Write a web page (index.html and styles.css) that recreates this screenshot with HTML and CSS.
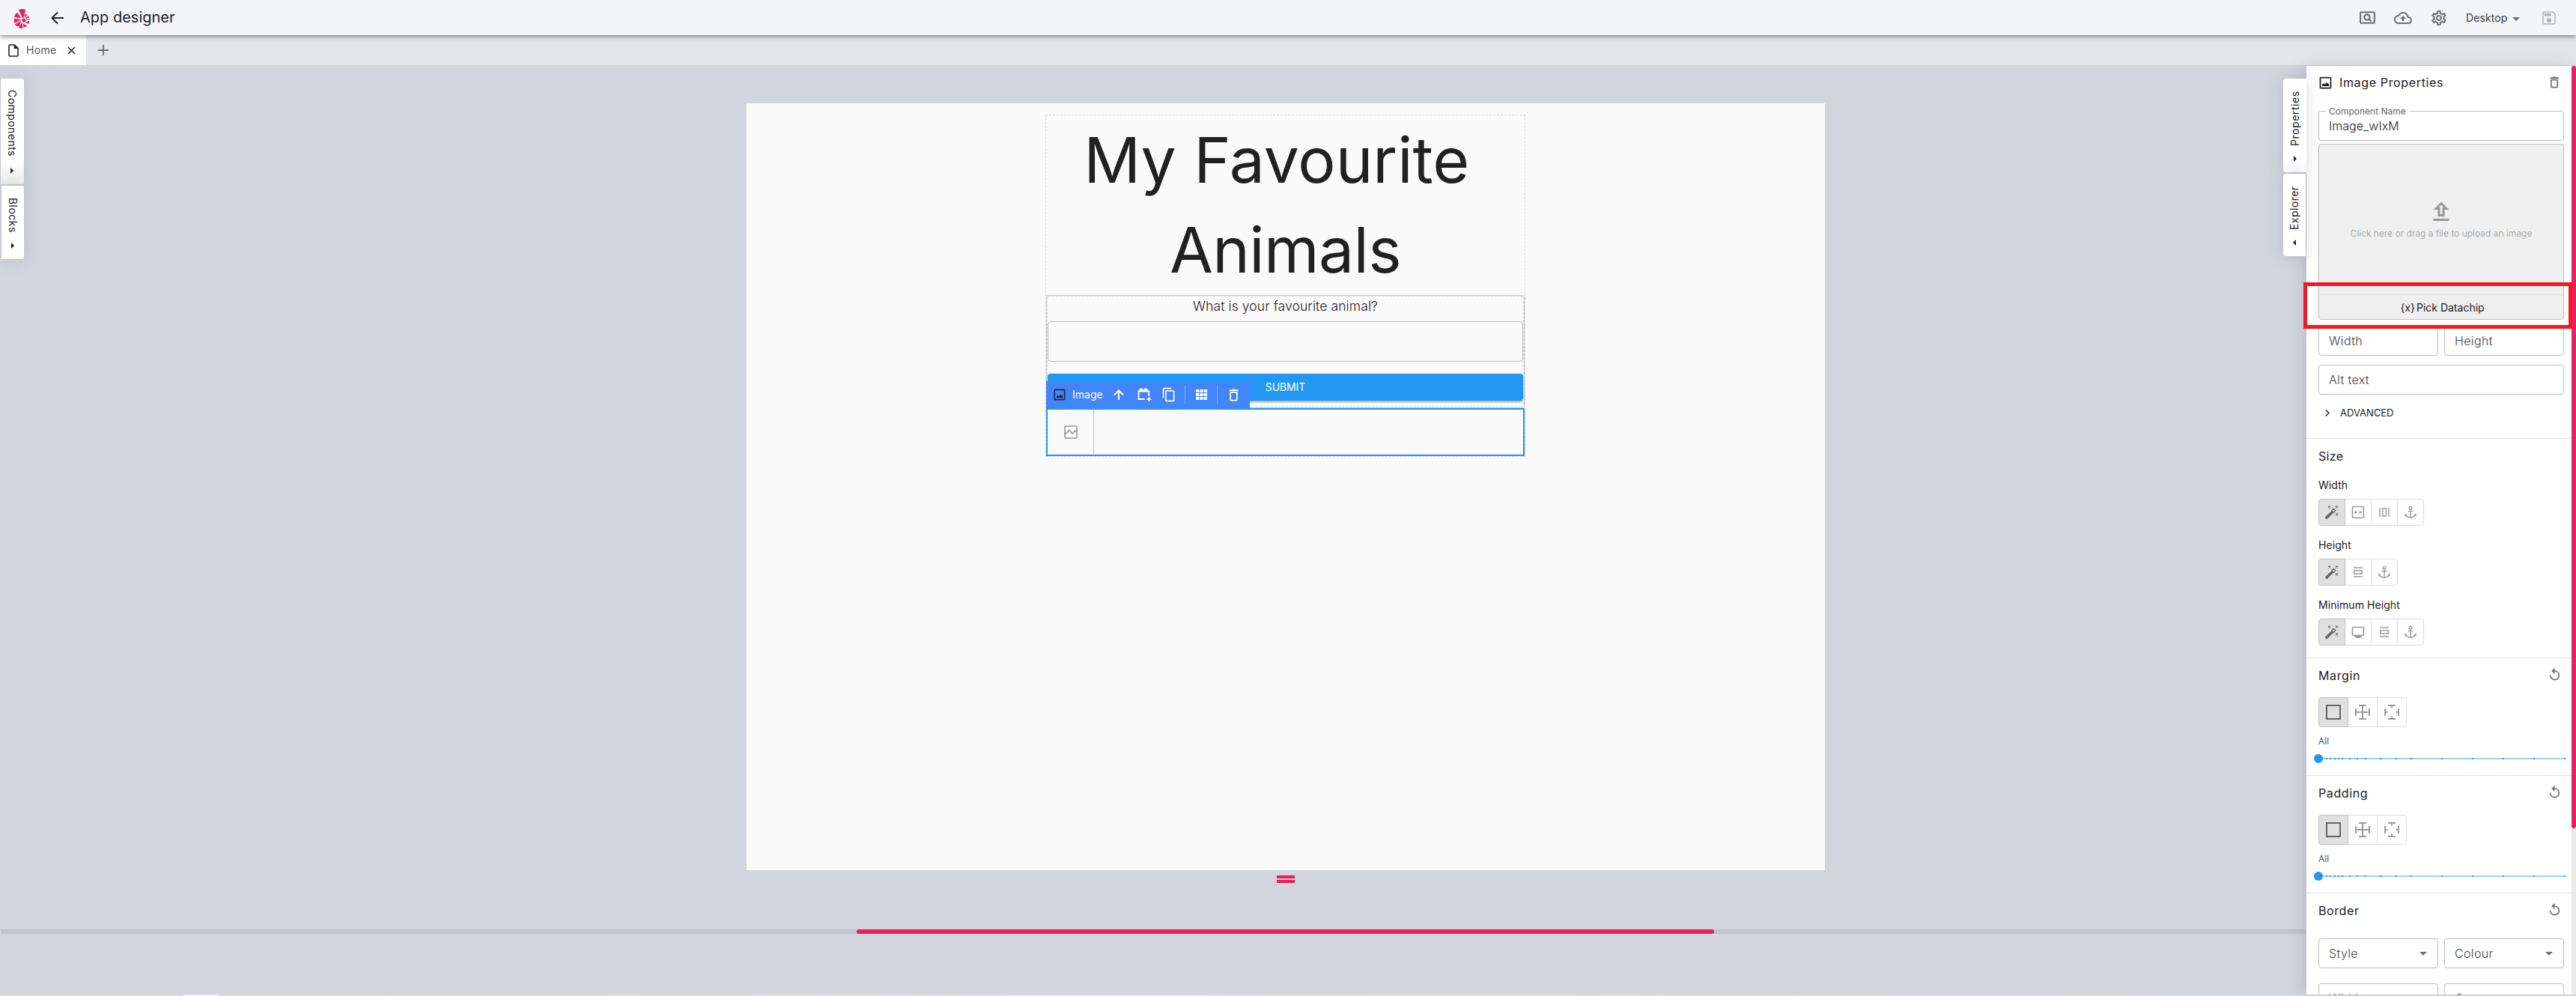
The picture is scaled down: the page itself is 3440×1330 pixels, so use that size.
FILE: index.html
```html
<!DOCTYPE html>
<html lang="en">
<head>
<meta charset="utf-8">
<title>App designer</title>
<link rel="stylesheet" href="styles.css">
</head>
<body>
<svg class="defs" width="0" height="0">
  <symbol id="image" viewBox="0 0 24 24"><path d="M19 5v14H5V5h14m0-2H5c-1.100 0-2 .9-2 2v14c0 1.100.9 2 2 2h14c1.100 0 2-.9 2-2V5c0-1.100-.9-2-2-2z"/><path d="M7 17v-2.200l2-2.300 2 2 2.500-3 1.500 2 1-1 1.500 2.200V17z"/></symbol>
  <symbol id="trash" viewBox="0 0 24 24"><path d="M6 19c0 1.100.9 2 2 2h8c1.100 0 2-.9 2-2V7H6v12zM8 9h8v10H8V9zm7.500-5-1-1h-5l-1 1H5v2h14V4z"/></symbol>
  <symbol id="caret" viewBox="0 0 24 24"><path d="M7 10l5 5 5-5z"/></symbol>
  <symbol id="replay" viewBox="0 0 24 24"><path d="M12 5V1L7 6l5 5V7c3.310 0 6 2.690 6 6s-2.690 6-6 6-6-2.690-6-6H4c0 4.420 3.580 8 8 8s8-3.580 8-8-3.580-8-8-8z"/></symbol>
  <symbol id="wand" viewBox="0 0 20 20"><path d="M1.200 16.300 9.800 8l2.600 2.600-8.600 8.300q-.6.600-1.200 0l-1.400-1.400q-.6-.6 0-1.200z"/><path d="M9.800 8l2.600-2.600 2.600 2.600-2.600 2.600z" fill="none" stroke="currentColor" stroke-width="1.100"/><path d="M5.200 1.600l3 3m0-3l-3 3M15 1.600l3 3m0-3l-3 3M15 11.500l3 3m0-3l-3 3" fill="none" stroke="currentColor" stroke-width="1.200"/></symbol>
  <symbol id="fit" viewBox="0 0 20 20"><rect x="2.500" y="2.500" width="15" height="15" rx="1" fill="none" stroke="currentColor" stroke-width="1.600"/><path d="M4.500 10l3-2.300v1.600h1.300v1.400H7.500v1.600zM15.500 10l-3-2.300v1.600h-1.300v1.400h1.300v1.600z"/></symbol>
  <symbol id="cols" viewBox="0 0 20 20"><path d="M4 4v12M16 4v12M7.700 4.700h4.600v10.600H7.700z" fill="none" stroke="currentColor" stroke-width="1.500"/></symbol>
  <symbol id="rows" viewBox="0 0 20 20"><path d="M4 4h12M4 16h12M4.700 7.700h10.600v4.600H4.700z" fill="none" stroke="currentColor" stroke-width="1.500"/></symbol>
  <symbol id="anchor" viewBox="0 0 20 20"><g fill="none" stroke="currentColor" stroke-width="1.400"><circle cx="10" cy="4.200" r="1.800"/><path d="M10 6v11.500M6.500 8.600h7M3.300 12.800Q4.500 17 10 17.300q5.500-.3 6.700-4.500"/></g><path d="M2.200 11.500l.3 4.200 3.400-2zM17.800 11.500l-.3 4.200-3.400-2z"/></symbol>
  <symbol id="screen" viewBox="0 0 20 20"><rect x="2.500" y="3.500" width="15" height="11" rx="1" fill="none" stroke="currentColor" stroke-width="1.700"/><path d="M5 15h10v1.500h-1.500V18h-7v-1.500H5z"/></symbol>
  <symbol id="square" viewBox="0 0 20 20"><path d="M1 1h18v18H1z" fill="none" stroke="currentColor" stroke-width="2"/></symbol>
  <symbol id="cross" viewBox="0 0 20 20"><path d="M10 1v18M1 10h18M5 1h10M5 19h10M1 5v10M19 5v10" fill="none" stroke="currentColor" stroke-width="2"/></symbol>
  <symbol id="sides" viewBox="0 0 20 20"><path d="M10 0v4.500M10 15.500V20M0 10h4.500M15.500 10H20M5 1h10M5 19h10M1 5v10M19 5v10" fill="none" stroke="currentColor" stroke-width="2"/></symbol>
</svg>

<header class="topbar">
  <svg class="logo" viewBox="0 0 68 88"><path d="M21 5Q36 0 50 5L42 38h-6zM15 16l17 24L3 36Q6 22 15 16zM3 42l30 4L4 61Q1 50 3 42zM5 66l26-15-6 23q-14 1-20-8zM22 78l13-20 4 21-6 5zM39 61l16 11q0 6-13 5zM50 56l16-5q-1 9-6 14zM53 48l13-6v5zM49 38l14-7 2 6-12 6zM45 32l3-8 10 1-9 11z"/><circle cx="43" cy="49" r="8"/></svg>
  <svg class="back" viewBox="0 0 18 18"><path d="M17 9H2M9 1.500L1.500 9 9 16.500"/></svg>
  <h1>App designer</h1>
  <div class="actions">
    <svg viewBox="0 0 24 24" width="25" height="25"><path d="M11.490 16c.88 0 1.700-.26 2.390-.7l2.440 2.440 1.420-1.420-2.440-2.430c.44-.7.7-1.510.7-2.390C16 9.010 13.990 7 11.500 7S7 9.010 7 11.500 9.010 16 11.490 16zm.01-7C12.880 9 14 10.120 14 11.500S12.880 14 11.500 14 9 12.880 9 11.500 10.120 9 11.500 9zM20 4H4c-1.100 0-2 .9-2 2v12c0 1.100.9 2 2 2h16c1.100 0 2-.9 2-2V6c0-1.100-.9-2-2-2zm0 14H4V6h16v12z"/></svg>
    <svg class="cloud" viewBox="0 0 24 24" width="24" height="24"><path d="M19.350 10.040C18.670 6.590 15.640 4 12 4 9.110 4 6.600 5.640 5.350 8.040 2.340 8.360 0 10.910 0 14c0 3.310 2.690 6 6 6h13c2.760 0 5-2.240 5-5 0-2.640-2.050-4.780-4.650-4.960zM19 18H6c-2.210 0-4-1.790-4-4 0-2.050 1.530-3.760 3.560-3.970l1.070-.11.5-.95C8.080 7.140 9.940 6 12 6c2.620 0 4.880 1.860 5.390 4.430l.3 1.500 1.530.11c1.560.1 2.780 1.410 2.780 2.960 0 1.650-1.350 3-3 3zM8 13h2.550v3h2.900v-3H16l-4-4z"/></svg>
    <svg class="gear" viewBox="0 0 24 24" width="24" height="24"><path d="M19.430 12.980c.04-.32.070-.64.070-.98 0-.34-.03-.66-.07-.98l2.110-1.650c.19-.15.240-.42.120-.64l-2-3.460c-.09-.16-.26-.25-.44-.25-.06 0-.12.010-.17.030l-2.490 1c-.52-.4-1.080-.73-1.690-.98l-.38-2.650C14.460 2.180 14.250 2 14 2h-4c-.25 0-.46.180-.49.420l-.38 2.650c-.61.250-1.170.590-1.690.980l-2.490-1c-.06-.02-.12-.03-.18-.03-.17 0-.34.090-.43.250l-2 3.460c-.13.220-.07.490.120.640l2.110 1.650c-.04.320-.07.650-.07.980 0 .33.030.660.070.980l-2.110 1.650c-.19.150-.24.420-.12.640l2 3.460c.09.160.260.250.440.250.06 0 .12-.01.170-.03l2.490-1c.52.400 1.080.730 1.690.980l.38 2.650c.03.240.240.420.490.420h4c.25 0 .46-.18.490-.42l.38-2.650c.61-.25 1.170-.59 1.690-.98l2.490 1c.06.020.120.030.180.030.17 0 .34-.09.430-.25l2-3.460c.12-.22.070-.49-.12-.64l-2.110-1.650zm-1.980-1.710c.04.310.050.520.050.730 0 .21-.02.430-.05.730l-.14 1.130.89.700 1.080.840-.7 1.210-1.270-.51-1.040-.42-.9.680c-.43.320-.84.560-1.250.730l-1.060.43-.16 1.130-.2 1.350h-1.400l-.19-1.350-.16-1.130-1.060-.43c-.43-.18-.83-.41-1.230-.71l-.91-.7-1.060.43-1.270.51-.7-1.210 1.080-.84.890-.7-.14-1.130c-.03-.31-.05-.54-.05-.74s.02-.43.050-.73l.14-1.130-.89-.7-1.080-.84.700-1.210 1.270.51 1.040.42.900-.68c.43-.32.840-.56 1.250-.73l1.060-.43.160-1.130.200-1.350h1.390l.19 1.350.16 1.130 1.060.43c.43.180.830.410 1.230.71l.91.700 1.060-.43 1.270-.51.700 1.210-1.070.85-.89.700.140 1.130zM12 8c-2.210 0-4 1.790-4 4s1.790 4 4 4 4-1.790 4-4-1.790-4-4-4zm0 6c-1.100 0-2-.9-2-2s.9-2 2-2 2 .9 2 2-.9 2-2 2z"/></svg>
    <span class="device">Desktop</span>
    <svg class="dev-caret" width="24" height="24"><use href="#caret"/></svg>
    <svg class="save" viewBox="0 0 18 18" width="18" height="18"><path d="M1 3q0-2 2-2h11l3 3v11q0 2-2 2H3q-2 0-2-2z" fill="none" stroke="currentColor" stroke-width="1.600"/><path d="M3 3h9v3.500H3z"/><circle cx="9" cy="12" r="3"/></svg>
  </div>
</header>

<nav class="tabs">
  <div class="tab">
    <svg class="doc" viewBox="0 0 14 17"><path d="M1.800 1H8.500L13 5.300V14.800Q13 16 11.800 16H2.200Q1 16 1 14.800V1.800Z" fill="none" stroke="currentColor" stroke-width="1.600"/><path d="M7.700 1v5H13z"/></svg>
    <span>Home</span>
    <svg class="close" viewBox="0 0 12 12"><path d="M1 1l10 10M11 1L1 11"/></svg>
  </div>
  <svg class="plus" viewBox="0 0 14 14"><path d="M7 0v14M0 7h14"/></svg>
</nav>

<main class="workspace">
  <aside class="side left">
    <div class="vtab components"><span>Components</span><i></i></div>
    <div class="vtab blocks"><span>Blocks</span><i></i></div>
  </aside>

  <section class="stage">
    <div class="canvas">
      <div class="container">
        <h2>My Favourite&nbsp; <span>Animals</span></h2>
        <div class="form">
          <p>What is your favourite animal?</p>
          <div class="input"></div>
          <div class="submit">SUBMIT</div>
        </div>
        <div class="selected">
          <div class="placeholder"><svg viewBox="0 0 18 18" width="18" height="18"><path d="M2 1h14q1 0 1 1v14q0 1-1 1H2q-1 0-1-1V2q0-1 1-1z M1 9.500l1.500 1.500L6.800 6.500l4.500 4.500L14.500 7 17 9" fill="none" stroke="#999" stroke-width="1.600"/></svg></div>
          <div class="toolbar">
            <svg class="dark" width="20" height="20"><use href="#image"/></svg>
            <span>Image</span>
            <svg class="t-up" viewBox="0 0 14 14" width="14" height="14"><path d="M7 14V2M1 7.500l6-6 6 6" fill="none" stroke="#fff" stroke-width="2"/></svg>
            <svg class="t-block" viewBox="0 0 18 18" width="18" height="18"><path d="M10 15H1.500V4.500h13.800V11" fill="none" stroke="#fff" stroke-width="1.900"/><path d="M2.500 4V2q0-1.500 1.500-1.500h2Q7.500.5 7.500 2v1h1V2Q8.500.5 10 .5h2q1.500 0 1.500 1.500v2z"/><path d="M15.500 12v6M12.500 15h6" stroke="#fff" stroke-width="1.800"/></svg>
            <svg class="t-copy" viewBox="0 0 24 24" width="20" height="20"><path d="M16 1H4c-1.100 0-2 .9-2 2v14h2V3h12V1zm3 4H8c-1.100 0-2 .9-2 2v14c0 1.100.9 2 2 2h11c1.100 0 2-.9 2-2V7c0-1.100-.9-2-2-2zm0 16H8V7h11v14z"/></svg>
            <b></b>
            <svg class="t-grid" viewBox="0 0 15 14" width="15" height="14"><path d="M0 0h4.400v4H0zM5.300 0h4.400v4H5.300zM10.600 0H15v4h-4.400zM0 5h4.400v4H0zM5.300 5h4.400v4H5.300zM10.600 5H15v4h-4.400zM0 10h4.400v4H0zM5.300 10h4.400v4H5.300zM10.600 10H15v4h-4.400z"/></svg>
            <b></b>
            <svg class="t-del" width="21" height="21"><use href="#trash"/></svg>
          </div>
        </div>
      </div>
    </div>
    <div class="handle"></div>
    <div class="hscroll"><div class="hthumb"></div></div>
  </section>

  <aside class="side right">
    <div class="vtab props"><i></i><span>Properties</span></div>
    <div class="vtab explorer"><i></i><span>Explorer</span></div>
  </aside>

  <aside class="panel">
    <div class="panel-body">
      <section class="first">
        <div class="head"><svg width="21" height="21"><use href="#image"/></svg><h3>Image Properties</h3><svg class="head-del" width="20" height="20"><use href="#trash"/></svg></div>
        <div class="field named"><label>Component Name</label><span>Image_wIxM</span></div>
        <div class="upload">
          <div class="drop"><svg viewBox="0 0 24 24" width="36" height="36"><path d="M9 16h6v-6h4l-7-7-7 7h4zm3-10.170L14.170 8H13v6h-2V8H9.830L12 5.830zM5 18h14v2H5z"/></svg><span>Click here or drag a file to upload an image</span></div>
          <div class="pick"><span class="brace">{x}</span><span>Pick Datachip</span><div class="callout"></div></div>
        </div>
        <div class="pair dims"><div class="field">Width</div><div class="field">Height</div></div>
        <div class="field alt">Alt text</div>
        <div class="advanced"><svg viewBox="0 0 6 9" width="6" height="9"><path d="M.8.500 5 4.500.8 8.500"/></svg><span>ADVANCED</span></div>
      </section>

      <section class="size">
        <h3>Size</h3>
        <label>Width</label>
        <div class="group"><div class="on"><svg><use href="#wand"/></svg></div><div><svg><use href="#fit"/></svg></div><div><svg><use href="#cols"/></svg></div><div><svg><use href="#anchor"/></svg></div></div>
        <label>Height</label>
        <div class="group"><div class="on"><svg><use href="#wand"/></svg></div><div><svg><use href="#rows"/></svg></div><div><svg><use href="#anchor"/></svg></div></div>
        <label>Minimum Height</label>
        <div class="group"><div class="on"><svg><use href="#wand"/></svg></div><div><svg><use href="#screen"/></svg></div><div><svg><use href="#rows"/></svg></div><div><svg><use href="#anchor"/></svg></div></div>
      </section>

      <section class="spacing">
        <div class="row"><h3>Margin</h3><svg width="21" height="20"><use href="#replay"/></svg></div>
        <div class="group big"><div class="on"><svg><use href="#square"/></svg></div><div><svg><use href="#cross"/></svg></div><div><svg><use href="#sides"/></svg></div></div>
        <small>All</small>
        <div class="slider"></div>
      </section>

      <section class="spacing">
        <div class="row"><h3>Padding</h3><svg width="21" height="20"><use href="#replay"/></svg></div>
        <div class="group big"><div class="on"><svg><use href="#square"/></svg></div><div><svg><use href="#cross"/></svg></div><div><svg><use href="#sides"/></svg></div></div>
        <small>All</small>
        <div class="slider"></div>
      </section>

      <section class="border">
        <div class="row"><h3>Border</h3><svg width="21" height="20"><use href="#replay"/></svg></div>
        <div class="pair"><div class="field sel">Style<svg width="24" height="24"><use href="#caret"/></svg></div><div class="field sel">Colour<svg width="24" height="24"><use href="#caret"/></svg></div></div>
        <div class="pair second"><div class="field">Width</div><div class="field">Corners</div></div>
      </section>
    </div>
    <div class="vscroll"><div class="vthumb"></div></div>
  </aside>
</main>
<div class="strip"></div>
<script src="slider.js"></script>
</body>
</html>
```
FILE: slider.js
```
// Spacing steps in px: fine at the low end of the track, coarse at the high end.
const stops = [11, 16, 22, 27, 32, 42, 52, 63, 83, 104, 124, 165, 206, 247, 288, 329];
document.querySelectorAll('.slider').forEach(slider => {
  stops.forEach(x => {
    const tick = document.createElement('i');
    tick.style.left = x - 1 + 'px';
    slider.appendChild(tick);
  });
});
```
FILE: styles.css
```css
*{box-sizing:border-box}
body{margin:0;width:3440px;height:1330px;overflow:hidden;display:flex;flex-direction:column;font:400 14px/20px Inter,"Liberation Sans",sans-serif;color:#212121;background:#d2d5dd}
h1,h2,h3,p{margin:0;font-weight:400}
svg{display:block;flex:none;fill:currentColor}
.defs{position:absolute}
.topbar{height:47px;flex:none;background:#f4f5f7;display:flex;align-items:center;padding-left:18px;box-shadow:0 2px 4px -1px rgba(0,0,0,.4),0 4px 6px rgba(0,0,0,.16);position:relative;z-index:5}
.logo{width:22px;height:29px;color:#e91e63;margin-top:4px}
.back{width:18px;height:18px;margin-left:28px;fill:none;stroke:#212121;stroke-width:2}
.topbar h1{font-size:20px;line-height:28px;margin-left:21px;margin-top:-1px}
.actions{margin-left:auto;display:flex;align-items:center;color:#707070;padding-right:27px}
.cloud{margin-left:23px}
.gear{margin-left:24px}
.device{margin-left:24px;color:#3a3a3a;width:55px;letter-spacing:.1px}
.dev-caret{margin-left:0;margin-top:2px}
.save{margin-left:23px;color:#b2b3b5}
.tabs{height:40px;flex:none;background:#e5e6ea;display:flex;align-items:center}
.tab{width:115px;height:40px;background:#fff;display:flex;align-items:center;padding-left:11px;color:#212121}
.tab span{margin-left:10px;letter-spacing:.3px;color:#555;width:41px}
.doc{width:14px;height:17px}
.close{width:11px;height:11px;margin-left:14px;fill:none;stroke:#212121;stroke-width:1.6}
.plus{width:14px;height:14px;margin-left:16px;fill:none;stroke:#707070;stroke-width:1.8}
.workspace{flex:1;min-height:0;display:flex;border-top:1px solid #cdd0d8;position:relative}
.side{display:flex;flex-direction:column;padding-top:17px;gap:2px;flex:none}
.side.left{width:32px;padding-left:1px}
.vtab{background:#fff;border-radius:0 3px 3px 0;display:flex;flex-direction:column;align-items:center;box-shadow:0 0 20px rgba(110,110,130,.25)}
.vtab span{writing-mode:vertical-rl;letter-spacing:.45px;line-height:20px}
.left .vtab i{border-left:4px solid #212121;border-top:4px solid transparent;border-bottom:4px solid transparent;margin-top:14px}
.components{height:141px;padding-top:15px;width:31px;background:linear-gradient(#fff 75%,#eee);padding-right:2px}
.components span{height:90px}
.blocks{height:98px;padding-top:16px;margin-left:1px}
.blocks span{height:46px}
.stage{flex:1;display:flex;flex-direction:column;align-items:flex-start;padding-top:50px;min-width:0}
.canvas{width:1440px;height:1024px;background:#fafafa;flex:none;margin-left:965px;padding:15px 400px 0 399px}
.container{width:641px;height:457px;border:1px dashed #d6d6d6}
.container h2{font-size:84px;line-height:120px;height:240px;text-align:center}
.container h2 span{letter-spacing:-.6px}
.form{height:151px;border:1px solid #c9c9c9;border-radius:3px;outline:1px dashed #d9d9d9;outline-offset:-2px;padding:0 1px;display:flex;flex-direction:column}
.form p{font-size:17.5px;font-weight:300;letter-spacing:.1px;line-height:27px;height:34px;text-align:center}
.input{height:54px;border:1px solid #bdbdbd;border-radius:4px;margin-bottom:16px}
.submit{height:36px;background:#2196f3;border-radius:4px;color:#fff;text-align:center;line-height:36px;letter-spacing:-.1px;box-shadow:0 2px 3px rgba(0,0,0,.35)}
.selected{height:64px;border:2px solid #2196f3;position:relative}
.placeholder{width:62px;height:60px;border-right:1px solid #bdbdbd;display:flex;align-items:center;justify-content:center}
.toolbar{position:absolute;left:-2px;top:-38px;width:272px;height:36px;background:#4285f9;color:#fff;display:flex;align-items:center;padding-left:8px}
.toolbar span{margin-left:7px;width:41px}
.toolbar b{width:1px;height:26px;background:#78a8fb}
.dark{color:#222d44}
.t-up{margin-left:14px}
.t-block{margin-left:18px}
.t-copy{margin:0 11px 0 14px}
.t-grid{margin:0 13px 0 14px}
.t-del{margin-left:11px}
.handle{width:24px;height:10px;border-top:4px solid #ef1a5a;border-bottom:4px solid #ef1a5a;margin:7px 0 62px 1673px;flex:none}
.hscroll{width:3079px;height:6px;background:#c0c3cb;margin-left:-31px;flex:none}
.hthumb{width:1145px;height:6px;background:#e91e63;border-radius:3px;margin-left:1143px}
.side.right{width:31px}
.right .vtab{border-radius:4px 0 0 4px;position:relative;z-index:2}
.right .vtab span{transform:rotate(180deg);order:-1}
.right .vtab i{border:4px solid transparent}
.props{height:125px;padding-top:16px}
.props span{height:74px;letter-spacing:.55px}
.right .props i{border-left-color:#212121;border-right-width:0;margin-top:13px}
.explorer{height:110px;padding-top:15px;margin-right:1px}
.explorer span{height:60px}
.right .explorer i{border-right-color:#212121;border-left-width:0;margin-top:13px}
.panel{width:360px;flex:none;background:#fff;display:flex;box-shadow:-4px 0 18px rgba(100,100,130,.25)}
.panel-body{width:354px;height:1240px;position:relative;z-index:3;clip-path:inset(0 -6px 0 -20px)}
.vscroll{width:6px;background:#e9e9e9}
.vthumb{height:1018px;background:#e91e63;border-radius:3px}
.panel section{display:flex;flex-direction:column;padding:0 10px 0 16px;border-bottom:1px solid #e2e2e2}
.panel h3{font-size:16px;line-height:24px;letter-spacing:.6px}
.panel .first{height:498px}
.head{height:44px;display:flex;align-items:center;margin-left:-1px}
.head h3{margin-left:8px;letter-spacing:.65px}
.head-del{margin-left:auto;margin-right:3px;color:#707070}
.field{height:40px;border:1px solid #bdbdbd;border-radius:4px;padding-left:13px;line-height:38px;font-size:16px;font-weight:300;letter-spacing:.35px;position:relative;color:#444}
.named{margin-top:16px;width:328px;color:#212121;letter-spacing:.05px}
.named label{position:absolute;left:9px;top:-10px;background:#fff;padding:0 5px 0 4px;font-size:12px;line-height:20px;color:#666;letter-spacing:0;font-weight:400}
.upload{width:328px;height:235px;margin-top:4px;border:1px solid #bdbdbd;border-radius:4px;background:#efefef}
.drop{height:201px;border-bottom:1px solid #e2e2e2;display:flex;flex-direction:column;align-items:center;padding-top:72px;color:#999}
.drop span{font-size:12px;line-height:16px;margin-top:3px;font-weight:300;letter-spacing:.08px}
.pick{height:32px;line-height:33px;display:flex;justify-content:center;gap:2px;position:relative;padding-left:3px}
.brace{font-size:14px}
.callout{position:absolute;left:-21px;top:-17px;width:359px;height:62px;border:5px solid #ed1c24;z-index:10}
.pair{display:flex;gap:8px;width:328px}
.pair .field{width:160px}
.dims{margin-top:8px}
.alt{margin-top:12px;width:328px}
.advanced{display:flex;align-items:center;gap:14px;font-size:13px;height:20px;margin:14px 0 0 9px}
.advanced svg{fill:none;stroke:#212121;stroke-width:1.5}
.panel .size{height:293px;padding-top:11px}
.size h3{letter-spacing:.3px}
.size label{letter-spacing:.07px;line-height:20px;margin-top:17px}
.group{display:flex;margin-top:8px;color:#9c9c9c}
.size .group+label{margin-top:16px}
.group div{width:36px;height:36px;border:1px solid #dcdcdc;margin-left:-1px;display:flex;align-items:center;justify-content:center}
.group svg{width:20px;height:20px}
.group div:first-child{border-radius:4px 0 0 4px;margin-left:0}
.group div:last-child{border-radius:0 4px 4px 0}
.group .on{background:#e0e0e0;border-color:#c0c0c0;color:#666;z-index:1}
.panel .spacing{height:157px;padding-top:11px}
.row{display:flex;justify-content:space-between;height:24px;align-items:center;padding-right:2px}
.row svg{color:#707070;margin-bottom:2px}
.big{margin-top:17px}
.group.big div{width:40px;height:40px}
.spacing small{font-size:12px;line-height:20px;margin-top:9px;color:#555}
.slider{width:330px;height:2px;background:#a3d2fa;margin-top:12px;position:relative}
.slider::before{content:"";position:absolute;left:-6px;top:-5px;width:12px;height:12px;border-radius:50%;background:#2196f3}
.slider i{position:absolute;width:2px;height:2px;background:#2196f3}
.panel .border{padding-top:11px;border-bottom:0}
.border .pair{margin-top:25px}
.border .second{margin-top:20px}
.sel svg{position:absolute;right:7px;top:7px;color:#707070}
.strip{height:2px;flex:none;background:linear-gradient(90deg,#dcdde0 244px,#f2f3f5 244px 292px,#dcdde0 292px,#dfe4e8 1440px,#cfe1e6 3440px)}
```
